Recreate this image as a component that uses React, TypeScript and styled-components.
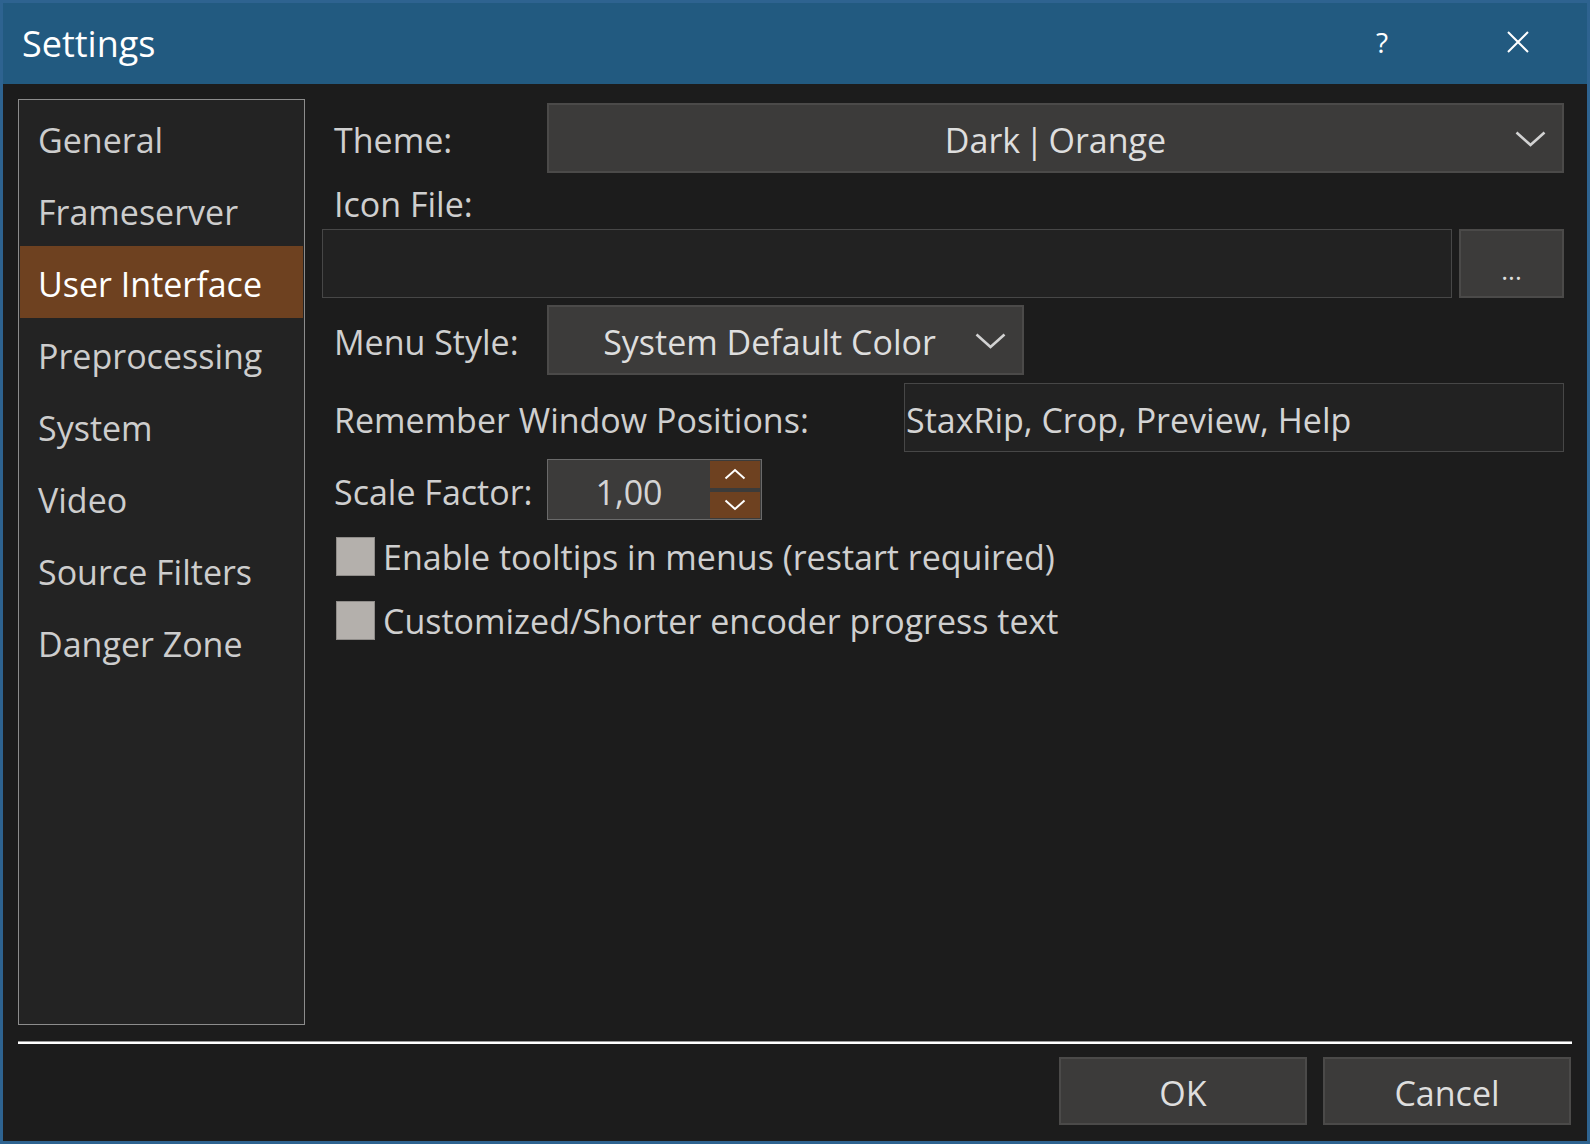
import React from "react";
import styled, { createGlobalStyle } from "styled-components";

const GlobalStyle = createGlobalStyle`
  html, body {
    margin: 0;
    padding: 0;
    background: #1c1c1c;
  }
  * { box-sizing: border-box; }
  body {
    font-family: "Open Sans", "Noto Sans", sans-serif;
  }
`;

const Window = styled.div`
  width: 1590px;
  height: 1144px;
  display: flex;
  flex-direction: column;
  border: 3px solid #2e6390;
  background: #1c1c1c;
  overflow: hidden;
`;

const TitleBar = styled.div`
  height: 81px;
  flex: none;
  background: #225a80;
  display: flex;
  align-items: center;
  padding-left: 19px;
  padding-right: 45px;
  color: #ffffff;
`;

const Title = styled.div`
  flex: 1;
  font-size: 36px;
  line-height: 1;
`;

const TitleButton = styled.div`
  width: 48px;
  display: flex;
  align-items: center;
  justify-content: center;
  color: #ffffff;
  font-size: 28px;
  margin-left: 88px;
  padding-bottom: 4px;
`;

const Body = styled.div`
  flex: 1;
  display: flex;
  flex-direction: column;
  padding: 15px 15px 16px 15px;
`;

const Main = styled.div`
  display: flex;
  gap: 17px;
  height: 926px;
`;

const Sidebar = styled.div`
  width: 287px;
  flex: none;
  border: 1px solid #8c8c8c;
  background: #232323;
  padding: 2px 1px;
  display: flex;
  flex-direction: column;
`;

const NavItem = styled.div<{ $active?: boolean }>`
  height: 72px;
  flex: none;
  display: flex;
  align-items: center;
  padding-left: 18px;
  padding-top: 3px;
  font-size: 34px;
  color: ${(p) => (p.$active ? "#ffffff" : "#cdcdcd")};
  background: ${(p) => (p.$active ? "#6e4120" : "transparent")};
`;

const Content = styled.div`
  flex: 1;
  display: flex;
  flex-direction: column;
  padding-top: 4px;
  padding-right: 8px;
`;

const Row = styled.div<{ $h: number; $mt?: number }>`
  display: flex;
  align-items: center;
  height: ${(p) => p.$h}px;
  margin-top: ${(p) => p.$mt ?? 0}px;
  flex: none;
`;

const Label = styled.div<{ $w?: number; $pt?: number }>`
  width: ${(p) => (p.$w ? `${p.$w}px` : "auto")};
  flex: none;
  padding-left: 12px;
  padding-top: ${(p) => p.$pt ?? 4}px;
  font-size: 34px;
  color: #cfcfcf;
  white-space: nowrap;
`;

const Combo = styled.div<{ $w?: number; $padRight?: number; $wordSpacing?: number }>`
  position: relative;
  height: 100%;
  ${(p) => (p.$w ? `width: ${p.$w}px; flex: none;` : "flex: 1;")}
  background: #3c3b3a;
  border: 2px solid #4b4a49;
  display: flex;
  align-items: center;
  justify-content: center;
  padding-right: ${(p) => p.$padRight ?? 0}px;
  padding-top: 4px;
  font-size: 34px;
  word-spacing: ${(p) => p.$wordSpacing ?? 0}px;
  color: #dedede;
  white-space: nowrap;
`;

const Chevron = styled.svg`
  position: absolute;
  right: 16px;
  top: 50%;
  margin-top: -7px;
  width: 31px;
  height: 16px;
`;

const TextBox = styled.div<{ $w?: number }>`
  height: 100%;
  ${(p) => (p.$w ? `width: ${p.$w}px; flex: none;` : "flex: 1;")}
  background: #222222;
  border: 1px solid #474747;
  display: flex;
  align-items: center;
  padding-left: 1px;
  padding-top: 4px;
  font-size: 34px;
  color: #d4d4d4;
  white-space: nowrap;
`;

const BrowseButton = styled.div`
  width: 105px;
  height: 100%;
  flex: none;
  margin-left: 7px;
  background: #3c3b3a;
  border: 2px solid #4b4a49;
  display: flex;
  align-items: center;
  justify-content: center;
  padding-top: 12px;
  font-size: 26px;
  color: #dedede;
`;

const Spinner = styled.div`
  width: 215px;
  height: 100%;
  flex: none;
  background: #3c3b3a;
  border: 1px solid #6a6a6a;
  display: flex;
  align-items: stretch;
  padding: 1px 1px 1px 0;
`;

const SpinValue = styled.div`
  flex: 1;
  display: flex;
  align-items: center;
  justify-content: center;
  padding-top: 4px;
  font-size: 34px;
  color: #d4d4d4;
`;

const SpinButtons = styled.div`
  width: 50px;
  display: flex;
  flex-direction: column;
  gap: 4px;
`;

const SpinButton = styled.div`
  flex: 1;
  background: #6e4120;
  display: flex;
  align-items: center;
  justify-content: center;
`;

const CheckRow = styled.div<{ $mt: number }>`
  display: flex;
  align-items: center;
  height: 39px;
  margin-top: ${(p) => p.$mt}px;
  padding-left: 14px;
  gap: 8px;
  flex: none;
`;

const CheckBox = styled.div`
  width: 39px;
  height: 39px;
  flex: none;
  background: #b4b0ac;
  border: 1px solid #8f8c89;
`;

const CheckText = styled.div`
  font-size: 34px;
  color: #cfcfcf;
  white-space: nowrap;
`;

const Separator = styled.div`
  margin-top: 16px;
  height: 3px;
  flex: none;
  border-top: 1px solid #9a9a9a;
  background: #ffffff;
`;

const Footer = styled.div`
  margin-top: 13px;
  display: flex;
  justify-content: flex-end;
  gap: 16px;
  padding-right: 1px;
`;

const DialogButton = styled.div`
  width: 248px;
  height: 68px;
  background: #3c3b3a;
  border: 2px solid #4b4a49;
  display: flex;
  align-items: center;
  justify-content: center;
  padding-top: 4px;
  font-size: 34px;
  color: #dedede;
`;

const ChevronDown = () => (
  <Chevron viewBox="0 0 31 16">
    <polyline points="1.5,1.5 15.5,14 29.5,1.5" fill="none" stroke="#d2d2d2" strokeWidth="2.6" />
  </Chevron>
);

const SmallArrow = ({ up }: { up?: boolean }) => (
  <svg width="22" height="12" viewBox="0 0 22 12">
    <polyline
      points={up ? "1.5,10.5 11,2 20.5,10.5" : "1.5,1.5 11,10 20.5,1.5"}
      fill="none"
      stroke="#ffffff"
      strokeWidth="2"
    />
  </svg>
);

const navItems = [
  "General",
  "Frameserver",
  "User Interface",
  "Preprocessing",
  "System",
  "Video",
  "Source Filters",
  "Danger Zone",
];

export default function App() {
  return (
    <>
      <GlobalStyle />
      <Window>
        <TitleBar>
          <Title>Settings</Title>
          <TitleButton>?</TitleButton>
          <TitleButton>
            <svg width="22" height="22" viewBox="0 0 22 22">
              <path d="M1 1 L21 21 M21 1 L1 21" stroke="#ffffff" strokeWidth="2" fill="none" />
            </svg>
          </TitleButton>
        </TitleBar>
        <Body>
          <Main>
            <Sidebar>
              {navItems.map((n) => (
                <NavItem key={n} $active={n === "User Interface"}>
                  {n}
                </NavItem>
              ))}
            </Sidebar>
            <Content>
              <Row $h={70}>
                <Label $w={225}>Theme:</Label>
                <Combo $wordSpacing={-4}>
                  Dark | Orange
                  <ChevronDown />
                </Combo>
              </Row>
              <Row $h={56}>
                <Label $pt={6}>Icon File:</Label>
              </Row>
              <Row $h={69}>
                <TextBox />
                <BrowseButton>...</BrowseButton>
              </Row>
              <Row $h={70} $mt={7}>
                <Label $w={225}>Menu Style:</Label>
                <Combo $w={477} $padRight={32}>
                  System Default Color
                  <ChevronDown />
                </Combo>
              </Row>
              <Row $h={69} $mt={8}>
                <Label $w={582}>Remember Window Positions:</Label>
                <TextBox>StaxRip, Crop, Preview, Help</TextBox>
              </Row>
              <Row $h={61} $mt={7}>
                <Label $w={225}>Scale Factor:</Label>
                <Spinner>
                  <SpinValue>1,00</SpinValue>
                  <SpinButtons>
                    <SpinButton>
                      <SmallArrow up />
                    </SpinButton>
                    <SpinButton>
                      <SmallArrow />
                    </SpinButton>
                  </SpinButtons>
                </Spinner>
              </Row>
              <CheckRow $mt={17}>
                <CheckBox />
                <CheckText>Enable tooltips in menus (restart required)</CheckText>
              </CheckRow>
              <CheckRow $mt={25}>
                <CheckBox />
                <CheckText>Customized/Shorter encoder progress text</CheckText>
              </CheckRow>
            </Content>
          </Main>
          <Separator />
          <Footer>
            <DialogButton>OK</DialogButton>
            <DialogButton>Cancel</DialogButton>
          </Footer>
        </Body>
      </Window>
    </>
  );
}
